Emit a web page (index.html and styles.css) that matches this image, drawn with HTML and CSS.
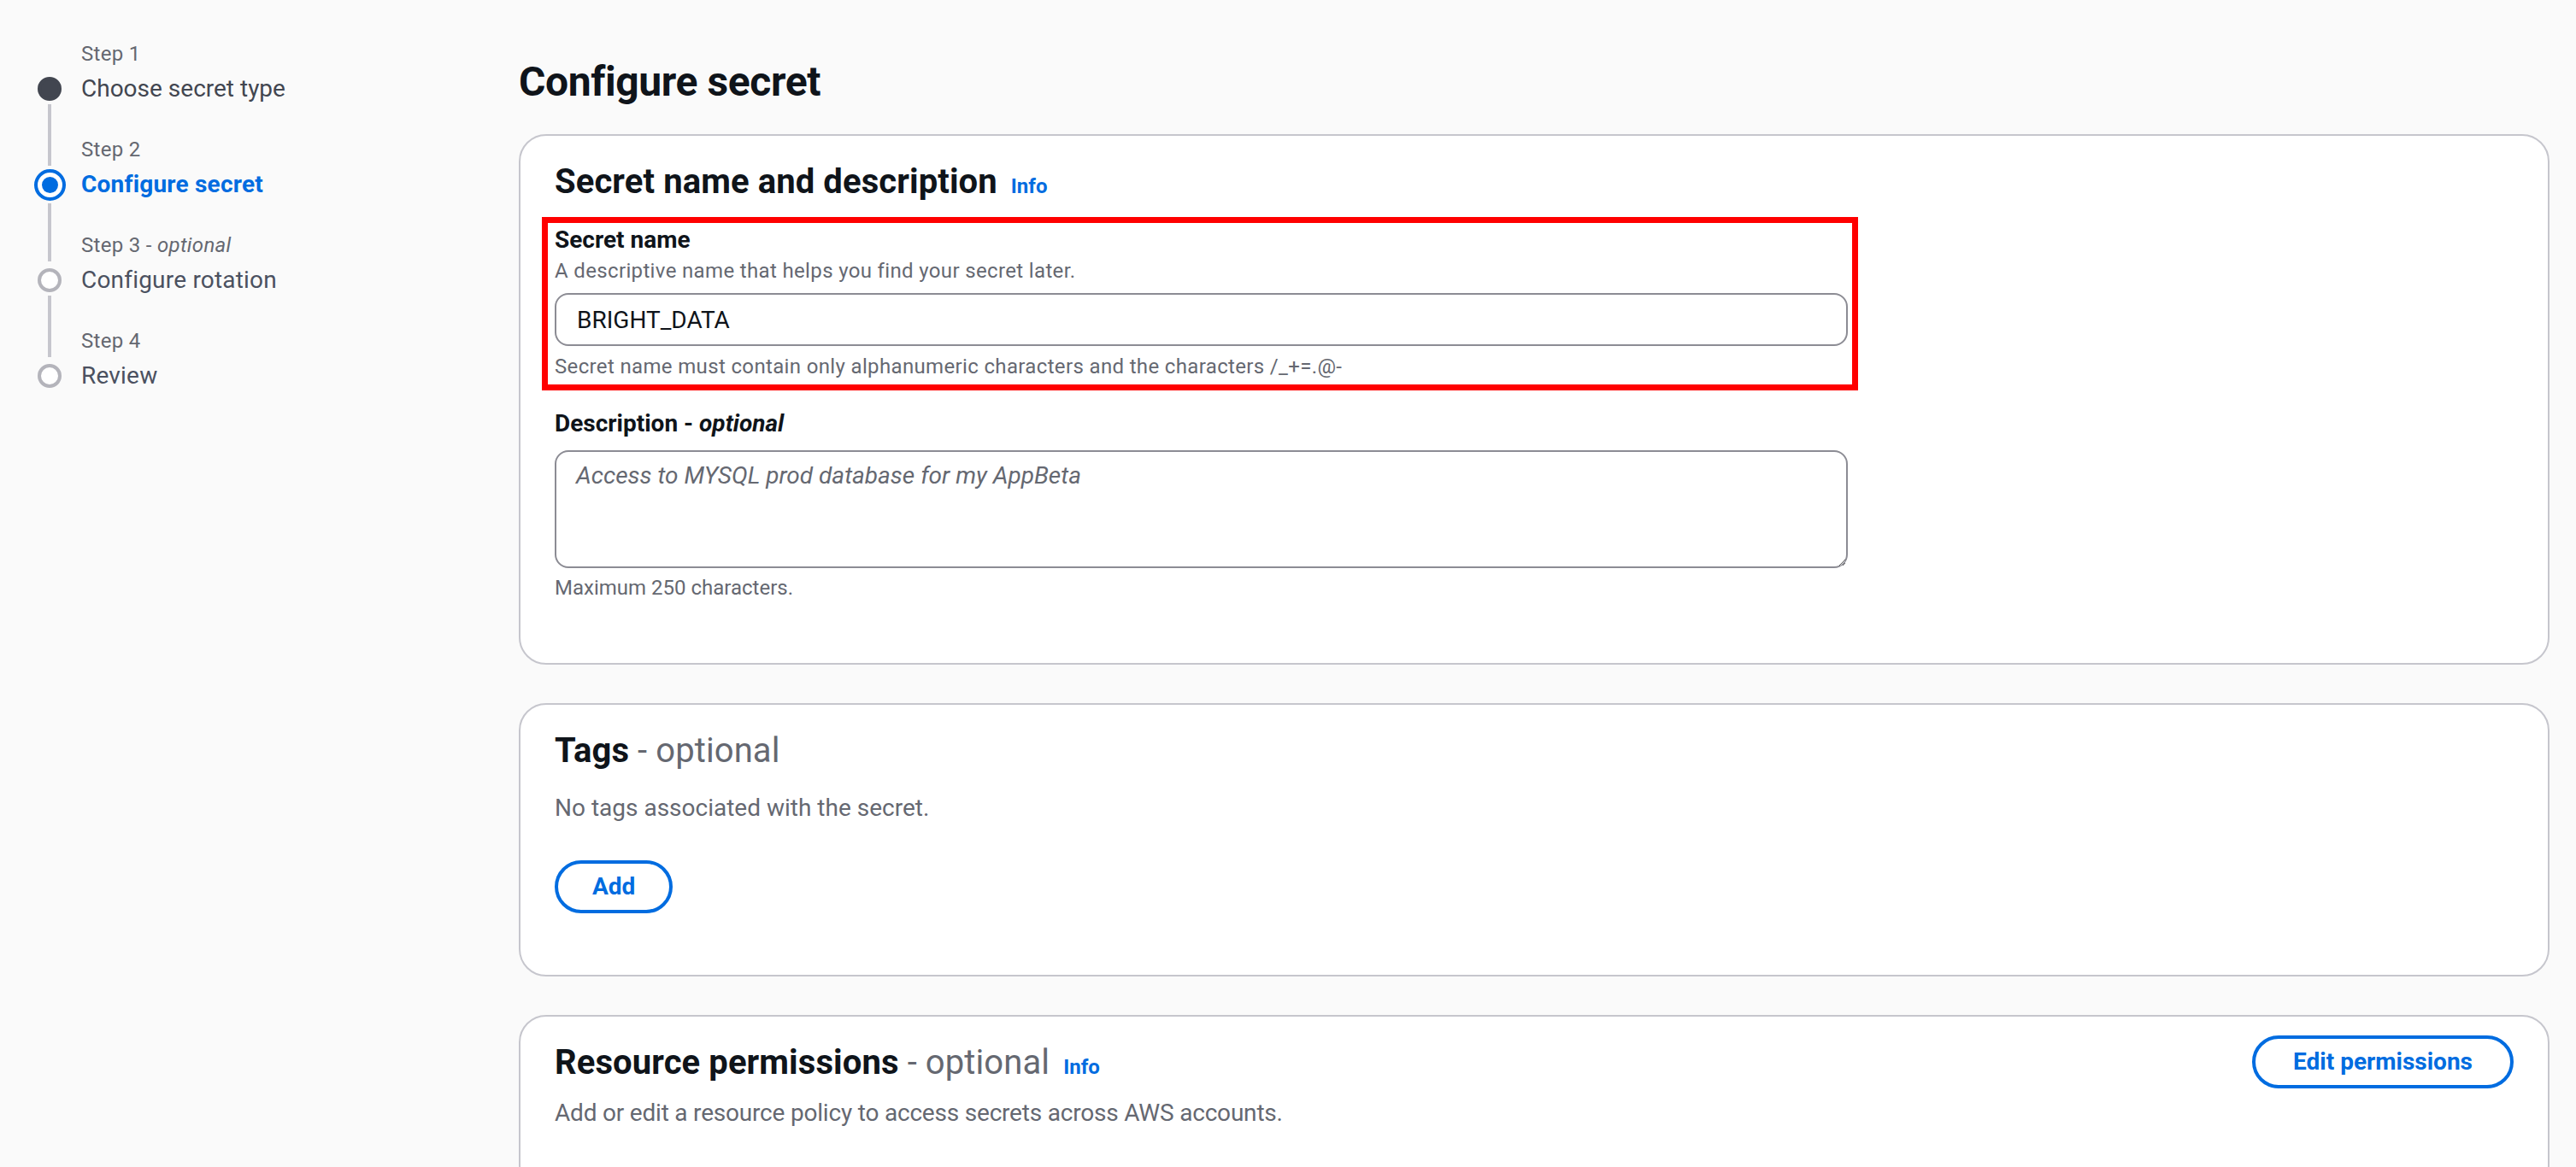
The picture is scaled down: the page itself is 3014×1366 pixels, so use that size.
FILE: index.html
```html
<!DOCTYPE html>
<html lang="en">
<head>
<meta charset="utf-8">
<title>Configure secret</title>
<link rel="stylesheet" href="styles.css">
</head>
<body>
<div class="page">
  <nav class="wizard-nav">
    <ol class="steps">
      <li class="step visited">
        <span class="step-label">Step 1</span>
        <span class="marker"></span>
        <span class="step-title">Choose secret type</span>
      </li>
      <li class="step active">
        <span class="step-label">Step 2</span>
        <span class="marker"><span class="marker-dot"></span></span>
        <span class="step-title">Configure secret</span>
      </li>
      <li class="step">
        <span class="step-label">Step 3 - <i>optional</i></span>
        <span class="marker"></span>
        <span class="step-title">Configure rotation</span>
      </li>
      <li class="step">
        <span class="step-label">Step 4</span>
        <span class="marker"></span>
        <span class="step-title">Review</span>
      </li>
    </ol>
  </nav>

  <main class="content">
    <h1 class="page-title">Configure secret</h1>

    <section class="panel">
      <header class="panel-header">
        <h2 class="panel-title">Secret name and description <a class="info-link">Info</a></h2>
      </header>
      <div class="panel-body">
        <div class="highlight">
          <div class="field">
            <label class="field-label" for="secret-name">Secret name</label>
            <div class="field-desc">A descriptive name that helps you find your secret later.</div>
            <input class="text-input" id="secret-name" type="text" value="BRIGHT_DATA">
            <div class="field-hint">Secret name must contain only alphanumeric characters and the characters /_+=.@-</div>
          </div>
        </div>
        <div class="field field-narrow">
          <label class="field-label" for="secret-desc">Description - <i>optional</i></label>
          <textarea class="text-area" id="secret-desc" placeholder="Access to MYSQL prod database for my AppBeta"></textarea>
          <div class="field-hint hint-tight">Maximum 250 characters.</div>
        </div>
      </div>
    </section>

    <section class="panel">
      <header class="panel-header">
        <h2 class="panel-title">Tags <span class="optional">- optional</span></h2>
      </header>
      <div class="panel-body">
        <p class="panel-text">No tags associated with the secret.</p>
        <button class="btn btn-add" type="button">Add</button>
      </div>
    </section>

    <section class="panel">
      <header class="panel-header header-row">
        <div class="header-main">
          <h2 class="panel-title">Resource permissions <span class="optional">- optional</span> <a class="info-link">Info</a></h2>
          <p class="header-desc">Add or edit a resource policy to access secrets across AWS accounts.</p>
        </div>
        <button class="btn btn-edit" type="button">Edit permissions</button>
      </header>
      <div class="panel-body"></div>
    </section>
  </main>
</div>
</body>
</html>
```

FILE: styles.css
```css
* {
  box-sizing: border-box;
}

html, body {
  margin: 0;
  padding: 0;
  background: #fafafa;
}

body {
  font-family: Roboto, "Open Sans", Arial, sans-serif;
  color: #0f141a;
  font-size: 28px;
  line-height: 40px;
}

.page {
  display: flex;
  align-items: flex-start;
}

/* ---------- Wizard navigation ---------- */

.wizard-nav {
  flex: 0 0 607px;
  padding: 47px 0 0 40px;
}

.steps {
  list-style: none;
  margin: 0;
  padding: 0;
}

.step {
  position: relative;
  display: grid;
  grid-template-columns: 36px 1fr;
  grid-template-rows: 32px 40px;
  column-gap: 19px;
  row-gap: 5px;
  margin-bottom: 35px;
}

.step:last-child {
  margin-bottom: 0;
}

.step:not(:last-child)::after {
  content: "";
  position: absolute;
  left: 16px;
  top: 75px;
  width: 4px;
  height: 72px;
  background: #c6c6cd;
}

.step.active::after {
  top: 79px;
  height: 68px;
}

.step-label {
  grid-column: 2;
  grid-row: 1;
  font-size: 24px;
  line-height: 32px;
  letter-spacing: 0.3px;
  color: #656871;
}

.marker {
  grid-column: 1;
  grid-row: 2;
  align-self: center;
  justify-self: center;
  width: 28px;
  height: 28px;
  border-radius: 50%;
  border: 4px solid #b4b4bb;
  background: #ffffff;
}

.step.visited .marker {
  border-color: #424650;
  background: #424650;
}

.step.active .marker {
  width: 37px;
  height: 37px;
  border-color: #006ce0;
  background: #ffffff;
  display: flex;
  align-items: center;
  justify-content: center;
}

.marker-dot {
  width: 19px;
  height: 19px;
  border-radius: 50%;
  background: #006ce0;
}

.step-title {
  grid-column: 2;
  grid-row: 2;
  font-size: 28px;
  line-height: 40px;
  letter-spacing: 0.2px;
  color: #4b5160;
  white-space: nowrap;
}

.step.visited .step-title {
  color: #424650;
  letter-spacing: 0;
}

.step.active .step-title {
  color: #006ce0;
  font-weight: 700;
}

/* ---------- Main content ---------- */

.content {
  flex: 1 1 auto;
  min-width: 0;
  padding: 66px 31px 0 0;
}

.page-title {
  margin: 0 0 31px;
  font-size: 48px;
  line-height: 60px;
  font-weight: 700;
  letter-spacing: -0.4px;
  color: #0f141a;
}

.panel {
  background: #ffffff;
  border: 2px solid #c6c6cd;
  border-radius: 32px;
  margin-bottom: 45px;
}

.panel-header {
  padding: 30px 40px 0;
}

.panel-title {
  margin: 0;
  font-size: 40px;
  line-height: 48px;
  font-weight: 700;
  letter-spacing: 0.1px;
  color: #0f141a;
}

.optional {
  font-weight: 400;
  color: #656871;
}

.info-link {
  margin-left: 6px;
  font-size: 24px;
  line-height: 32px;
  font-weight: 700;
  letter-spacing: 0;
  color: #006ce0;
  vertical-align: baseline;
}

.panel-body {
  padding: 0 40px 72px;
}

/* highlighted field (annotation frame) */
.highlight {
  width: 66%;
  box-sizing: content-box;
  border: 7px solid #ff0000;
  padding: 0 5px 5px 8px;
  margin: 17px 0 19px -15px;
}

.field {
  display: flex;
  flex-direction: column;
}

.field-narrow {
  width: 66%;
}

.field-label {
  font-size: 28px;
  line-height: 40px;
  font-weight: 700;
  color: #0f141a;
}

.field-desc {
  font-size: 24px;
  line-height: 32px;
  letter-spacing: 0.35px;
  color: #656871;
}

.text-input {
  margin-top: 10px;
  height: 62px;
  width: 100%;
  border: 2px solid #8c8c94;
  border-radius: 16px;
  background: #ffffff;
  padding: 0 24px;
  font-family: inherit;
  font-size: 28px;
  color: #0f141a;
  outline: none;
}

.text-area {
  margin-top: 11px;
  height: 138px;
  width: 100%;
  border: 2px solid #8c8c94;
  border-radius: 16px;
  background: #ffffff;
  padding: 8px 23px;
  font-family: inherit;
  font-size: 28px;
  line-height: 40px;
  color: #0f141a;
  resize: vertical;
  outline: none;
}

.text-area::placeholder {
  color: #656871;
  font-style: italic;
  opacity: 1;
}

.field-hint {
  margin-top: 8px;
  font-size: 24px;
  line-height: 32px;
  letter-spacing: 0.35px;
  color: #656871;
}

.hint-tight {
  margin-top: 7px;
  letter-spacing: 0;
}

.panel-text {
  margin: 23px 0 0;
  font-size: 28px;
  line-height: 40px;
  color: #656871;
}

.btn {
  display: inline-block;
  border: 4px solid #006ce0;
  border-radius: 40px;
  background: #ffffff;
  color: #006ce0;
  font-family: inherit;
  font-size: 28px;
  line-height: 40px;
  font-weight: 700;
  padding: 7px 40px;
  cursor: pointer;
}

.btn-add {
  margin-top: 41px;
}

.header-row {
  display: flex;
  justify-content: space-between;
  align-items: flex-start;
}

.header-desc {
  margin: 15px 0 0;
  font-size: 28px;
  line-height: 40px;
  letter-spacing: -0.2px;
  color: #656871;
}

.btn-edit {
  margin-top: -8px;
  padding: 7px 44px;
}
```
